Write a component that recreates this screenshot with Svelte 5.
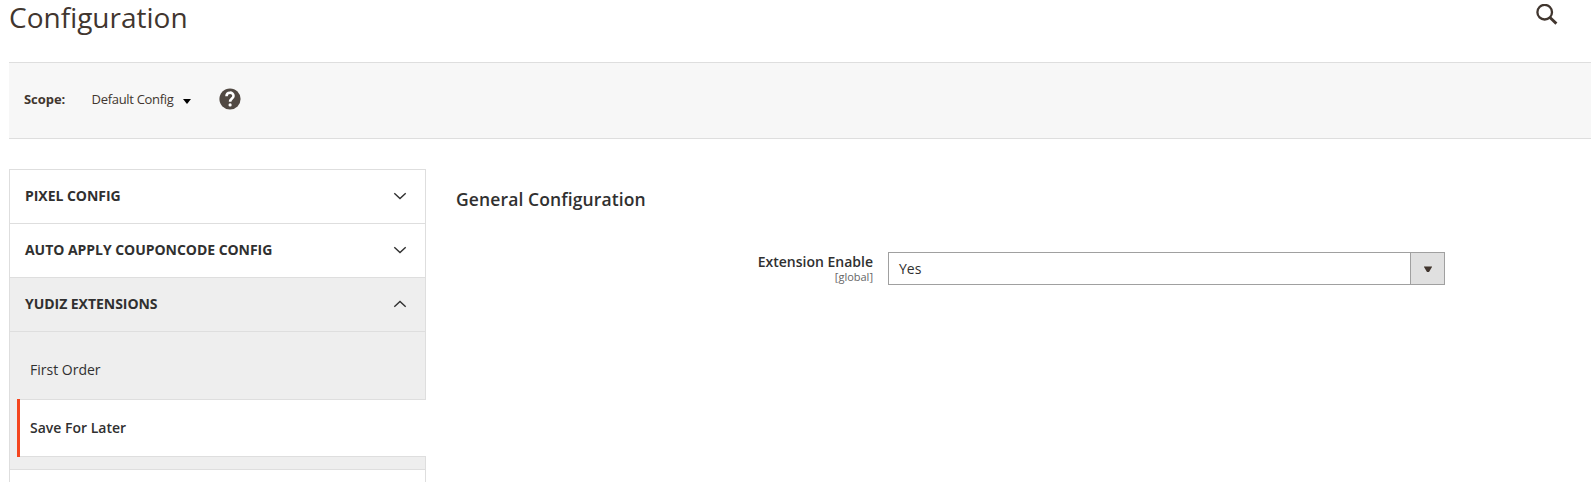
<script>
  const sections = [
    { title: 'Pixel Config', open: false },
    { title: 'Auto Apply Couponcode Config', open: false },
    { title: 'Yudiz Extensions', open: true }
  ];
</script>

<div class="page">
  <header>
    <h1>Configuration</h1>
    <svg class="search" width="22" height="22" viewBox="0 0 22 22" aria-label="Search">
      <circle cx="8.7" cy="8.2" r="7.3" fill="none" stroke="#41362f" stroke-width="2.3" />
      <path d="M13.7 13.3L20.4 19.6" fill="none" stroke="#41362f" stroke-width="2.9" />
    </svg>
  </header>

  <div class="scope">
    <span class="scope-label">Scope:</span>
    <span class="scope-value">Default Config</span>
    <svg class="scope-caret" width="8" height="5" viewBox="0 0 8 5"><path d="M0 0H8L4 5Z" fill="#000" /></svg>
    <svg class="help" width="22" height="22" viewBox="0 0 22 22" aria-label="Help">
      <circle cx="11" cy="11" r="10.6" fill="#514943" />
      <path d="M7.5 8.2C7.5 3.5 14.5 3.6 14.5 7.9C14.5 10.5 11.1 10.6 11.1 13.8" fill="none" stroke="#fff" stroke-width="2.6" />
      <circle cx="11.1" cy="16.9" r="1.6" fill="#fff" />
    </svg>
  </div>

  <div class="columns">
    <nav>
      {#each sections as s}
        <div class="section" class:open={s.open}>
          <strong>{s.title}</strong>
          <svg width="14" height="8" viewBox="0 0 14 8">
            <path d={s.open ? 'M1.3 6.8L7 1.4L12.7 6.8' : 'M1.3 1.2L7 6.6L12.7 1.2'} fill="none" stroke="#303030" stroke-width="1.4" />
          </svg>
        </div>
      {/each}
      <div class="items">
        <div class="item">First Order</div>
        <div class="item active">Save For Later</div>
      </div>
      <div class="next"></div>
    </nav>
    <main>
      <h2>General Configuration</h2>
      <div class="field">
        <div class="label"><b>Extension Enable</b><small>[global]</small></div>
        <div class="select">
          <span class="value">Yes</span>
          <span class="button">
            <svg width="8" height="6" viewBox="0 0 8 6"><path d="M0 0H8V1L5 6H3L0 1Z" fill="#41362f" /><path d="M0 0H8V1H0Z" fill="#8f8984" /></svg>
          </span>
        </div>
      </div>
    </main>
  </div>
</div>

<style>
  :global(body) { background: #fff; overflow: hidden; }
  .page {
    box-sizing: border-box;
    height: 482px;
    overflow: hidden;
    padding-left: 9px;
    font-family: 'Open Sans', sans-serif;
    font-size: 14px;
    color: #303030;
  }
  header { display: flex; justify-content: space-between; height: 62px; }
  h1 { margin: 0; font-size: 28px; line-height: 34px; font-weight: 400; color: #41362f; }
  .search { margin: 4px 33px 0 0; }
  .scope {
    display: flex;
    align-items: center;
    box-sizing: border-box;
    height: 77px;
    padding: 0 0 2px 15px;
    background: #f7f7f7;
    border: solid #dedede;
    border-width: 1px 0;
    font-size: 13px;
    color: #41362f;
  }
  .scope-label { width: 67.5px; padding-bottom: 1px; font-weight: 700; letter-spacing: -0.05px; }
  .scope-value { width: 91.5px; padding-bottom: 1px; white-space: nowrap; letter-spacing: -0.3px; }
  .scope-caret { margin-top: 3px; }
  .help { margin: 0 0 1px 28px; }
  .columns { display: flex; align-items: flex-start; padding-top: 30px; }
  nav { flex: none; width: 417px; }
  .section {
    display: flex;
    align-items: center;
    justify-content: space-between;
    box-sizing: border-box;
    height: 54px;
    padding: 0 18px 1px 15px;
    border: 1px solid #dedede;
    border-bottom: 0;
    text-transform: uppercase;
  }
  .section strong { padding-bottom: 2px; font-weight: 700; letter-spacing: -0.04px; }
  .open { background: #eee; }
  .items {
    box-sizing: border-box;
    height: 138px;
    padding: 10px 0 0 7px;
    background: #eee;
    border: solid #dedede;
    border-width: 1px 1px 0;
  }
  .item {
    box-sizing: border-box;
    height: 57px;
    padding: 18px 0 0 13px;
    line-height: 19px;
  }
  .active {
    height: 58px;
    margin-right: -1px;
    padding: 19px 0 0 10px;
    background: linear-gradient(#dedede, #dedede) top / 100% 1px no-repeat,
      linear-gradient(#dedede, #dedede) bottom / 100% 1px no-repeat, #fff;
    border-left: 3px solid #f4461f;
    font-weight: 600;
  }
  .next { height: 20px; border: solid #dedede; border-width: 1px 1px 0; }
  main { flex: 1; padding: 18px 0 0 30px; }
  h2 { margin: 0; font-size: 17.5px; line-height: 24px; font-weight: 600; letter-spacing: 0.12px; }
  .field { display: flex; margin-top: 41px; }
  .label { width: 417px; text-align: right; }
  .label b { display: block; font-weight: 600; line-height: 19px; }
  .label small { display: block; margin-top: -1px; font-size: 11px; line-height: 14px; color: #666; }
  .select {
    display: flex;
    box-sizing: border-box;
    width: 557px;
    height: 33px;
    margin-left: 15px;
    border: 1px solid #a0a0a0;
  }
  .value { flex: 1; padding-left: 10px; line-height: 32px; }
  .button {
    display: grid;
    place-items: center;
    width: 33px;
    background: #e0e0e0;
    border-left: 1px solid #a0a0a0;
  }
</style>
